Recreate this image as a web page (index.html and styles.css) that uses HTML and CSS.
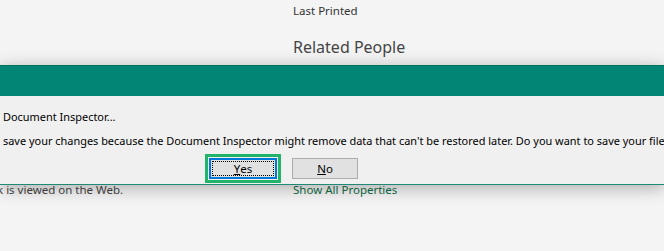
FILE: index.html
```html
<!DOCTYPE html>
<html lang="en">

<head>
  <meta charset="UTF-8" />
  <meta name="viewport" content="width=device-width, initial-scale=1.0" />
  <title>Document Inspector</title>
  <link rel="stylesheet" href="styles.css">
</head>

<body>
  <div class="backstage">
    <div class="props">
      <div class="prop-label">Last Printed</div>
      <h2 class="section-title">Related People</h2>
    </div>
    <p class="note">k is viewed on the Web.</p>
    <a class="link" href="#">Show All Properties</a>
  </div>

  <div class="dialog">
    <div class="dialog-title"></div>
    <div class="dialog-body">
      <p class="msg msg-first">Document Inspector...</p>
      <p class="msg">save your changes because the Document Inspector might remove data that can't be restored later. Do you want to save your file now?</p>
      <div class="buttons">
        <div class="focus-ring">
          <button class="btn btn-default"><span class="btn-label"><u>Y</u>es</span></button>
        </div>
        <button class="btn"><span class="btn-label"><u>N</u>o</span></button>
      </div>
    </div>
  </div>
</body>

</html>
```

FILE: styles.css
```css
body {
  font-family: "Noto Sans", "Open Sans", sans-serif;
  background-color: #f4f4f4;
  margin: 0;
  padding: 0;
  width: 664px;
  height: 251px;
  overflow: hidden;
  position: relative;
}

.backstage {
  display: grid;
  grid-template-columns: 293px 1fr;
  grid-template-rows: 182px auto;
  height: 251px;
}

.props {
  grid-column: 2;
  grid-row: 1;
  display: flex;
  flex-direction: column;
}

.note {
  grid-column: 1;
  grid-row: 2;
  margin: 0 0 0 -3px;
  font-size: 11.5px;
  color: #444;
  white-space: nowrap;
}

.prop-label {
  margin-top: 3px;
  font-size: 11.5px;
  color: #333;
}

.section-title {
  margin: 18px 0 0 0;
  font-size: 16px;
  font-weight: normal;
  color: #444;
}

.link {
  grid-column: 2;
  grid-row: 2;
  justify-self: start;
  font-size: 11.5px;
  color: #106e46;
  text-decoration: none;
}

/* dialog sits over the backstage page */
.dialog {
  position: absolute;
  top: 65px;
  left: 0;
  right: 0;
  height: 120px;
  box-shadow: 0 3px 16px rgba(0, 0, 0, 0.3);
  display: flex;
  flex-direction: column;
}

.dialog-title {
  height: 30px;
  background-color: #038575;
  border-top: 1px solid #02705f;
}

.dialog-body {
  flex: 1;
  background-color: #f0f0f0;
  border-bottom: 1px solid #1e8a76;
  padding: 13px 0 0 3px;
  overflow: hidden;
}

.msg {
  margin: 0;
  font-size: 10.95px;
  line-height: 16px;
  color: #000;
  white-space: nowrap;
}

.msg-first {
  margin-bottom: 8px;
}

.buttons {
  display: flex;
  align-items: center;
  gap: 11px;
  margin: 5px 0 0 202px;
}

.focus-ring {
  border: 3px solid #21b36a;
  padding: 1px;
  display: flex;
}

.btn {
  width: 66px;
  height: 21px;
  padding: 1px;
  border: 1px solid #adadad;
  background-color: #e1e1e1;
  font-family: inherit;
  font-size: 11.5px;
  color: #000;
  display: flex;
}

.btn-default {
  width: 68px;
  border: 2px solid #0078d7;
  padding: 0;
}

.btn-label {
  flex: 1;
  display: flex;
  align-items: center;
  justify-content: center;
  line-height: 1;
}

.btn-default .btn-label {
  outline: 1px dotted #000;
  outline-offset: -2px;
}
```
